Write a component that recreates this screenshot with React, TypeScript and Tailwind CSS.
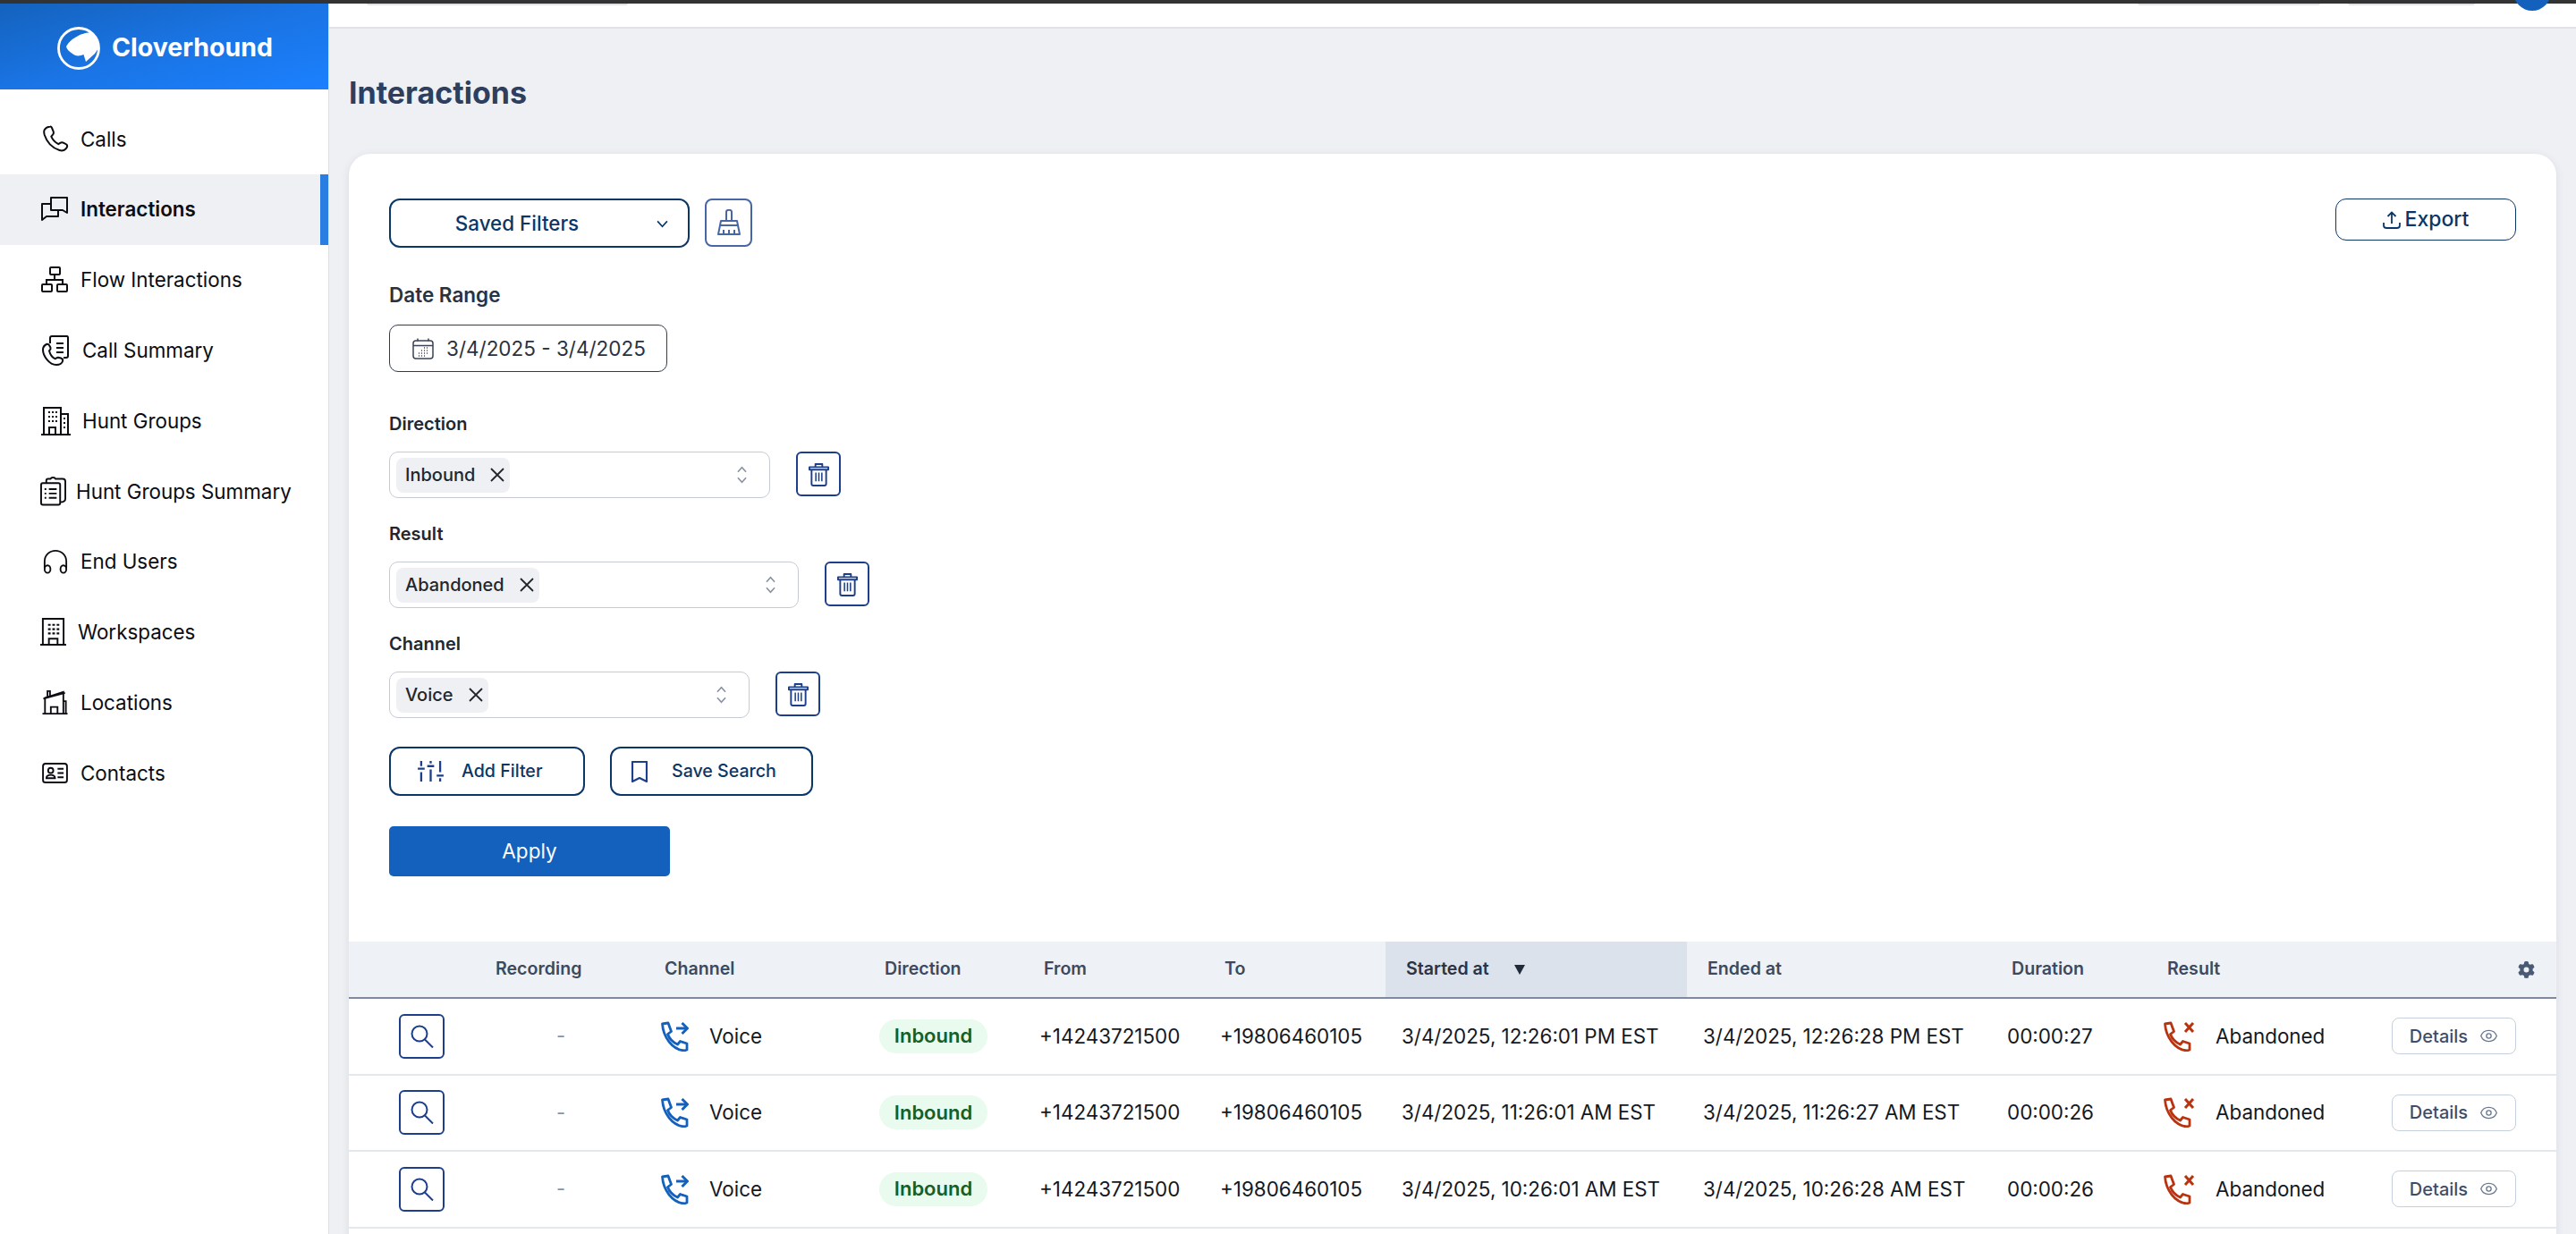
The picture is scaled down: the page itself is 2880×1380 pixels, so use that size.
import { useState } from "react";
import { Eye } from "lucide-react";

type IconProps = { className?: string };

const PHONE_PATH =
  "M2.5 3 9 2l3.500 9.500-4 3c1.800 5 5.500 9 11 11.500l3-3.500 7.500 2.500v7l-3 1C13.500 31.500 3.500 18 2.500 3Z";

function PhoneLine({ className }: IconProps) {
  return (
    <svg viewBox="0 0 30 30" fill="none" stroke="currentColor" strokeWidth="2" strokeLinejoin="round" className={className}>
      <path d="M9 1.500c-2.500.2-5 1.500-6.200 3.500-1 1.800-.6 4 0 6 2.600 8 9 14.500 16.700 17 2.500.8 5 .5 7-1.500 1.500-1.500 2-3.700.8-5l-3-1.700c-1.300-.7-2.800-.7-4 .1l-2 1.300c-3.500-1.800-6.500-5-8-8.500l1.700-2c.9-1 1.100-2.500.6-3.800L11 3c-.3-.9-1.100-1.600-2-1.500Z" />
    </svg>
  );
}

function ChatsIcon({ className }: IconProps) {
  return (
    <svg viewBox="0 0 30 28" fill="none" stroke="currentColor" strokeWidth="2" strokeLinejoin="round" className={className}>
      <path d="M11 1h18v17l-5-3H11z" />
      <path d="M10 8H1v18l5-4h13v-6" />
    </svg>
  );
}

function FlowIcon({ className }: IconProps) {
  return (
    <svg viewBox="0 0 30 30" fill="none" stroke="currentColor" strokeWidth="2" className={className}>
      <rect x="10" y="1" width="11" height="8" rx="1" />
      <rect x="1" y="20" width="11" height="8" rx="1" />
      <rect x="18" y="20" width="11" height="8" rx="1" />
      <path d="M15 9v6M6 20v-5h18v5" />
    </svg>
  );
}

function CallSummaryIcon({ className }: IconProps) {
  return (
    <svg viewBox="0 0 30 34" fill="none" stroke="currentColor" strokeWidth="2" strokeLinejoin="round" className={className}>
      <path d="M9 9V3c0-1 1-2 2-2h17c1 0 1 1 1 2v20c0 1-1 2-2 2h-3" />
      <path d="M16 9h8M16 14h8M16 19h8" />
      <path d="M5 10c-2 1-4 3-4 6 0 7 7 17 15 17 3 0 6-1 7-4 .5-1.500-.5-3-2-3.500l-3-.8c-1.200-.2-2 1-3 1.500-3-1-6-5-7-9 1-.8 2-2 1.500-3.500L8 11c-.5-1-2-1.500-3-1Z" />
    </svg>
  );
}

function HuntGroupsIcon({ className }: IconProps) {
  return (
    <svg viewBox="0 0 33 32" fill="none" stroke="currentColor" strokeWidth="2" className={className}>
      <path d="M0 31h33M3 31V1h19v30M22 8h8v23" />
      <path d="M9 31v-8h7v8" />
      <path d="M8 6h2M12 6h2M16 6h2M8 11h2M12 11h2M16 11h2M8 16h2M12 16h2M16 16h2M25 13h2M25 18h2M25 23h2" strokeWidth="2.200" />
    </svg>
  );
}

function ClipboardListIcon({ className }: IconProps) {
  return (
    <svg viewBox="0 0 30 34" fill="none" stroke="currentColor" strokeWidth="2" strokeLinejoin="round" className={className}>
      <rect x="1" y="8" width="22" height="25" rx="2" />
      <path d="M7 8V5c0-1 1-2 2-2h3c.5-2 5-2 5.500 0H26c1.500 0 3 1 3 3v20c0 2-2 4-6 4" />
      <path d="M10 15h9M10 20h9M10 25h9M5 15h2M5 20h2M5 25h2" />
    </svg>
  );
}

function HeadsetIcon({ className }: IconProps) {
  return (
    <svg viewBox="0 0 30 30" fill="none" stroke="currentColor" strokeWidth="2" className={className}>
      <path d="M2 23v-8C2 7 8 2 15 2s13 5 13 13v8" />
      <ellipse cx="5.500" cy="24" rx="3.500" ry="4.500" />
      <ellipse cx="24.500" cy="24" rx="3.500" ry="4.500" />
    </svg>
  );
}

function WorkspaceIcon({ className }: IconProps) {
  return (
    <svg viewBox="0 0 30 32" fill="none" stroke="currentColor" strokeWidth="2" className={className}>
      <path d="M0 31h30M3 31V1h24v30" />
      <path d="M10 31v-7h10v7" />
      <path d="M9 8h3M14 8h3M19 8h3M9 13h3M14 13h3M19 13h3M9 18h3M14 18h3M19 18h3" strokeWidth="2.200" />
    </svg>
  );
}

function LocationIcon({ className }: IconProps) {
  return (
    <svg viewBox="0 0 30 30" fill="none" stroke="currentColor" strokeWidth="2" className={className}>
      <path d="M0 28h30M3 28V9l22-7v26M25 13h3v15" />
      <path d="M1 10 27 3M6 8V1h3v6" />
      <path d="M10 28v-8h8v8" />
    </svg>
  );
}

function ContactIcon({ className }: IconProps) {
  return (
    <svg viewBox="0 0 30 24" fill="none" stroke="currentColor" strokeWidth="2" className={className}>
      <rect x="1" y="1" width="28" height="22" rx="3" />
      <circle cx="10" cy="9" r="3" />
      <path d="M5 18c0-5 10-5 10 0ZM18 7h7M18 12h7M18 17h7" />
    </svg>
  );
}

function BroomIcon({ className }: IconProps) {
  return (
    <svg viewBox="0 0 26 30" fill="none" stroke="currentColor" strokeWidth="2" strokeLinejoin="round" className={className}>
      <path d="M10 13V3c0-3 6-3 6 0v10" />
      <path d="M4 13h18l1 5H3z" />
      <path d="M3 18 1 28h24l-2-10M7 23v5M13 23v5M19 23v5" />
    </svg>
  );
}

function CalendarIcon({ className }: IconProps) {
  return (
    <svg viewBox="0 0 24 24" fill="none" stroke="currentColor" strokeWidth="1.500" className={className}>
      <rect x="1" y="3" width="22" height="20" rx="3" />
      <path d="M1 8.500h22M6 0.500v3M18 0.500v3" />
      <path d="M7 17h1M10 17h1M13 17h1M16 17h1M10 14h1M13 14h1M16 14h1M7 20h1M10 20h1M13 20h1M16 11h1M13 11h1" strokeWidth="1.300" />
    </svg>
  );
}

function TrashIcon({ className }: IconProps) {
  return (
    <svg viewBox="0 0 24 28" fill="none" stroke="currentColor" strokeWidth="2" strokeLinejoin="round" className={className}>
      <path d="M8 5V2h8v3" />
      <path d="M1 5.500h22v3H1z" />
      <path d="M3.500 8.500V25c0 1 1 2 2 2h13c1 0 2-1 2-2V8.500" />
      <path d="M8.500 12v10M12 12v10M15.500 12v10" strokeWidth="1.600" />
    </svg>
  );
}

function UpDownIcon({ className }: IconProps) {
  return (
    <svg viewBox="0 0 14 22" fill="none" stroke="currentColor" strokeWidth="1.800" className={className}>
      <path d="M2 7.500 7 2l5 5.500M2 14.500 7 20l5-5.500" />
    </svg>
  );
}

function SlidersIcon({ className }: IconProps) {
  return (
    <svg viewBox="0 0 30 26" fill="none" stroke="currentColor" strokeWidth="2.400" className={className}>
      <path d="M4 1v6M4 14v11M15 1v3M15 11v14M26 1v13M26 21v4" />
      <path d="M0 10h8M11 7h8M22 18h8" />
    </svg>
  );
}

function BookmarkIcon({ className }: IconProps) {
  return (
    <svg viewBox="0 0 18 24" fill="none" stroke="currentColor" strokeWidth="2.200" strokeLinejoin="round" className={className}>
      <path d="M1 1h16v22l-8-4-8 4z" />
    </svg>
  );
}

function ExportIcon({ className }: IconProps) {
  return (
    <svg viewBox="0 0 20 20" fill="none" stroke="currentColor" strokeWidth="1.800" className={className}>
      <path d="M10 14V1.500M5.500 6 10 1.500 14.500 6" />
      <path d="M1 13v3c0 2 1 3 3 3h12c2 0 3-1 3-3v-3" />
    </svg>
  );
}

function SearchIcon({ className }: IconProps) {
  return (
    <svg viewBox="0 0 26 26" fill="none" stroke="currentColor" strokeWidth="2" className={className}>
      <circle cx="10" cy="10" r="8.500" />
      <path d="m16 16.500 9 9" />
    </svg>
  );
}

function GearIcon({ className }: IconProps) {
  return (
    <svg viewBox="0 0 512 512" fill="currentColor" className={className}>
      <path d="M495.900 166.600c3.200 8.700.5 18.400-6.400 24.600l-43.300 39.400c1.100 8.300 1.700 16.800 1.700 25.400s-.6 17.100-1.700 25.400l43.300 39.400c6.900 6.200 9.600 15.900 6.400 24.600-4.400 11.900-9.700 23.300-15.800 34.300l-4.700 8.100c-6.600 11-14 21.400-22.100 31.200-5.900 7.200-15.700 9.600-24.500 6.800l-55.700-17.700c-13.400 10.300-28.200 18.900-44 25.400l-12.500 57.100c-2 9.100-9 16.300-18.200 17.800-13.800 2.300-28 3.500-42.500 3.500s-28.700-1.200-42.500-3.500c-9.200-1.500-16.200-8.700-18.200-17.800l-12.500-57.100c-15.800-6.500-30.600-15.100-44-25.400l-55.600 17.800c-8.800 2.800-18.600.3-24.500-6.800-8.100-9.800-15.500-20.200-22.100-31.200l-4.700-8.100c-6.100-11-11.400-22.400-15.800-34.300-3.200-8.700-.5-18.400 6.400-24.600l43.300-39.400c-1.100-8.400-1.700-16.900-1.700-25.500s.6-17.100 1.700-25.400l-43.300-39.400c-6.900-6.200-9.600-15.900-6.400-24.600 4.400-11.900 9.700-23.300 15.800-34.300l4.700-8.100c6.600-11 14-21.400 22.100-31.200 5.900-7.200 15.700-9.600 24.500-6.800l55.700 17.700c13.400-10.300 28.200-18.900 44-25.400l12.500-57.100c2-9.100 9-16.300 18.200-17.800C227.300 1.200 241.500 0 256 0s28.700 1.200 42.500 3.500c9.200 1.500 16.200 8.700 18.200 17.800l12.500 57.100c15.800 6.500 30.600 15.100 44 25.400l55.700-17.700c8.800-2.800 18.600-.3 24.500 6.800 8.100 9.800 15.500 20.200 22.100 31.200l4.700 8.100c6.100 11 11.400 22.400 15.800 34.300zM256 336a80 80 0 1 0 0-160 80 80 0 1 0 0 160z" />
    </svg>
  );
}

function LogoMark({ className }: IconProps) {
  return (
    <svg viewBox="0 0 48 48" className={className}>
      <path
        d="M10 22C13 17 16 14 20 12 26 8 31 7 37 6L44 12 46 24 42 30 32 39 29.500 31C25 33 20 33 17 30 14 28 11 26 10 22Z"
        fill="white"
      />
      <circle cx="24" cy="24" r="22.500" fill="none" stroke="white" strokeWidth="2.800" />
    </svg>
  );
}

function InboundCallIcon({ className }: IconProps) {
  return (
    <svg viewBox="0 0 32 34" fill="none" stroke="currentColor" className={className}>
      <path d={PHONE_PATH} strokeWidth="2.800" strokeLinejoin="round" />
      <path d="M18 8h11" strokeWidth="3" />
      <path d="m24.500 2 6 6-6 6" strokeWidth="3" />
    </svg>
  );
}

function AbandonedCallIcon({ className }: IconProps) {
  return (
    <svg viewBox="0 0 36 34" fill="none" stroke="currentColor" className={className}>
      <path d={PHONE_PATH} strokeWidth="2.800" strokeLinejoin="round" />
      <path d="m25 2 9 10M34 2l-9 10" strokeWidth="3" />
    </svg>
  );
}

const NAV_ITEMS = [
  { label: "Calls", icon: <PhoneLine className="w-[30px] h-[30px] ml-[47px] mr-[13px]" /> },
  { label: "Interactions", icon: <ChatsIcon className="w-[30px] h-[28px] ml-[46px] mr-[14px]" /> },
  { label: "Flow Interactions", icon: <FlowIcon className="w-[30px] h-[30px] ml-[46px] mr-[14px]" /> },
  { label: "Call Summary", icon: <CallSummaryIcon className="w-[30px] h-[34px] ml-[47px] mr-[15px]" /> },
  { label: "Hunt Groups", icon: <HuntGroupsIcon className="w-[33px] h-[32px] ml-[46px] mr-[13px]" /> },
  { label: "Hunt Groups Summary", icon: <ClipboardListIcon className="w-[29px] h-[34px] ml-[45px] mr-[11px]" /> },
  { label: "End Users", icon: <HeadsetIcon className="w-[28px] h-[28px] ml-[48px] mr-[14px]" /> },
  { label: "Workspaces", icon: <WorkspaceIcon className="w-[29px] h-[31px] ml-[45px] mr-[13px]" /> },
  { label: "Locations", icon: <LocationIcon className="w-[29px] h-[28px] ml-[47px] mr-[14px]" /> },
  { label: "Contacts", icon: <ContactIcon className="w-[29px] h-[23px] ml-[47px] mr-[14px]" /> },
];

const ROWS = [
  { started: "3/4/2025, 12:26:01 PM EST", ended: "3/4/2025, 12:26:28 PM EST", duration: "00:00:27" },
  { started: "3/4/2025, 11:26:01 AM EST", ended: "3/4/2025, 11:26:27 AM EST", duration: "00:00:26" },
  { started: "3/4/2025, 10:26:01 AM EST", ended: "3/4/2025, 10:26:28 AM EST", duration: "00:00:26" },
];

const TABLE_COLS =
  "grid grid-cols-[141px_189px_246px_178px_202px_203px_337px_340px_174px_200px_1fr]";

function Sidebar() {
  const [active] = useState("Interactions");
  return (
    <aside className="w-[368px] shrink-0 bg-white border-r-[1px] border-[#dcdfe6]">
      <div className="h-[96px] flex items-center pl-[64px] pt-[3px] bg-gradient-to-br from-[#1462bd] via-[#1a74e4] to-[#1b80ff]">
        <LogoMark className="w-[48px] h-[48px]" />
        <span className="ml-[13px] text-[28.500px] font-bold text-white">Cloverhound</span>
      </div>
      <nav className="pt-[16px]">
        {NAV_ITEMS.map((item) => (
          <div
            key={item.label}
            className={
              item.label === active
                ? "h-[78.800px] flex items-center text-[22.400px] font-semibold text-[#0b0d12] bg-[#eff0f4] border-r-[9px] border-[#2a7de1]"
                : "h-[78.800px] flex items-center text-[22.400px] text-[#0b0d12]"
            }
          >
            {item.icon}
            <span>{item.label}</span>
          </div>
        ))}
      </nav>
    </aside>
  );
}

function FilterRow({ label, chip, selectWidth }: { label: string; chip: string; selectWidth: string }) {
  return (
    <div className="mt-[28px] first:mt-[46px]">
      <div className="text-[20px] leading-[24px] font-semibold text-[#23262d]">{label}</div>
      <div className="mt-[19px] flex items-start">
        <div className={`${selectWidth} h-[52px] flex items-center pl-[7px] pr-[24px] rounded-[10px] border-[1.500px] border-[#c5cad4]`}>
          <div className="h-[39px] flex items-center pl-[10px] pr-[6px] rounded-[8px] bg-[#eff0f4] text-[20px] font-medium text-[#23262d]">
            {chip}
            <svg viewBox="0 0 16 16" fill="none" stroke="currentColor" strokeWidth="1.800" className="ml-[17px] w-[16px] h-[16px]">
              <path d="m1 1 14 14M15 1 1 15" />
            </svg>
          </div>
          <UpDownIcon className="ml-auto w-[13px] h-[20px] text-[#8a92a3]" />
        </div>
        <button className="ml-[29px] w-[50px] h-[50px] flex items-center justify-center rounded-[6px] border-2 border-[#1c3f8b] text-[#1c3f8b]">
          <TrashIcon className="w-[23px] h-[27px]" />
        </button>
      </div>
    </div>
  );
}

function TableHeader() {
  const cell = "flex items-center pl-[23px] text-[19.600px] font-semibold text-[#3c4a61]";
  return (
    <div className={`${TABLE_COLS} h-[64px] bg-[#eef2f6] border-b-2 border-[#7d8aa3]`}>
      <div />
      <div className={cell}>Recording</div>
      <div className={cell}>Channel</div>
      <div className={cell}>Direction</div>
      <div className={cell}>From</div>
      <div className={cell}>To</div>
      <div className="flex items-center pl-[23px] text-[19.600px] font-semibold text-[#2a3445] bg-[#dce2ec]">
        Started at
        <span className="ml-[28px] w-0 h-0 border-x-[6px] border-x-transparent border-t-[11px] border-t-[#1f2a3b]" />
      </div>
      <div className={cell}>Ended at</div>
      <div className={cell}>Duration</div>
      <div className={cell}>Result</div>
      <div className="flex items-center justify-end pr-[24px]">
        <GearIcon className="w-[19px] h-[19px] text-[#4a5a74]" />
      </div>
    </div>
  );
}

function TableRow({ started, ended, duration }: { started: string; ended: string; duration: string }) {
  const cell = "flex items-center pl-[18px] text-[22.400px] text-[#14181f]";
  return (
    <div className={`${TABLE_COLS} h-[85.500px] border-b-2 border-[#e3e7ee]`}>
      <div className="flex items-center pl-[56px]">
        <button className="w-[51px] h-[50px] flex items-center justify-center rounded-[6px] border-2 border-[#1c3f8b] text-[#1c3f8b]">
          <SearchIcon className="w-[26px] h-[26px]" />
        </button>
      </div>
      <div className="flex items-center pl-[91px] text-[22px] text-[#8792a5]">-</div>
      <div className={cell}>
        <InboundCallIcon className="w-[32px] h-[34px] text-[#1460bd]" />
        <span className="ml-[23px]">Voice</span>
      </div>
      <div className="flex items-center pl-[17px]">
        <span className="h-[38px] w-[121px] flex items-center justify-center rounded-full bg-[#e9faee] text-[22px] font-semibold text-[#146026]">
          Inbound
        </span>
      </div>
      <div className={cell}>+14243721500</div>
      <div className={cell}>+19806460105</div>
      <div className={cell}>{started}</div>
      <div className={cell}>{ended}</div>
      <div className={cell}>{duration}</div>
      <div className={cell}>
        <AbandonedCallIcon className="w-[36px] h-[34px] text-[#b8330f]" />
        <span className="ml-[23px]">Abandoned</span>
      </div>
      <div className="flex items-center justify-end pr-[45px]">
        <button className="w-[139px] h-[41px] flex items-center justify-center rounded-[8px] border-[1.500px] border-[#c5d0de] text-[20px] font-medium text-[#3f4e68]">
          Details
          <Eye className="ml-[13px] w-[21px] h-[21px] text-[#6b7890]" strokeWidth={1.5} />
        </button>
      </div>
    </div>
  );
}

function App() {
  return (
    <div className="h-[1380px] w-[2880px] overflow-hidden flex flex-col bg-[#eff0f4] [font-family:Inter,'Liberation_Sans',sans-serif]">
      <div className="h-[4px] shrink-0 bg-[#333333]" />
      <div className="flex flex-1 min-h-0">
        <Sidebar />
        <main className="flex-1 min-w-0">
          <header className="h-[28px] flex items-start bg-white border-b-[2px] border-[#e0e2e6] pl-[42px]">
            <div className="w-[292px] h-[2px] rounded-b-[2px] bg-[#dfe3e6]" />
            <div className="ml-[1688px] w-[204px] h-[2px] rounded-b-[2px] bg-[#dfe3e6]" />
            <div className="ml-[31px] w-[142px] h-[2px] rounded-b-[2px] bg-[#dfe3e6]" />
            <div className="ml-[43px] w-[42px] h-[42px] -mt-[34px] rounded-full bg-[#1460bd]" />
          </header>
          <div className="px-[22px]">
            <h1 className="mt-[50px] h-[44px] text-[34px] leading-[44px] font-bold text-[#2d3e5f]">Interactions</h1>
            <section className="mt-[46px] bg-white rounded-[24px] shadow-[0_2px_10px_rgba(60,70,100,0.12)]">
              <div className="px-[45px] pt-[50px]">
                <div className="flex items-start justify-between">
                  <div className="flex items-start">
                    <button className="w-[336px] h-[55px] relative flex items-center justify-center pr-[50px] rounded-[12px] border-[2.500px] border-[#0b3768] text-[22.400px] font-medium text-[#0b3768]">
                      Saved Filters
                      <svg viewBox="0 0 14 10" fill="none" stroke="currentColor" strokeWidth="1.800" className="absolute right-[22px] top-[22px] w-[13px] h-[9px]">
                        <path d="m1 1.500 6 6.500 6-6.500" />
                      </svg>
                    </button>
                    <button className="ml-[17px] w-[53px] h-[54px] flex items-center justify-center rounded-[8px] border-[2.500px] border-[#4666a6] text-[#4666a6]">
                      <BroomIcon className="w-[26px] h-[30px]" />
                    </button>
                  </div>
                  <button className="w-[202px] h-[47px] flex items-center justify-center rounded-[12px] border-[1px] border-[#0b3768] text-[23px] font-medium text-[#0b3768]">
                    <ExportIcon className="w-[20px] h-[20px] mr-[5px]" />
                    Export
                  </button>
                </div>
                <div className="mt-[38px] text-[22.500px] leading-[30px] font-semibold text-[#2a3240]">Date Range</div>
                <div className="mt-[18px] w-[311px] h-[53px] flex items-center pl-[25px] rounded-[10px] border-[1px] border-[#333c4d] text-[22.500px] text-[#2a3240]">
                  <CalendarIcon className="w-[24px] h-[24px] text-[#3a4356]" />
                  <span className="ml-[14px] whitespace-nowrap">3/4/2025 - 3/4/2025</span>
                </div>
                <div>
                  <FilterRow label="Direction" chip="Inbound" selectWidth="w-[426px]" />
                  <FilterRow label="Result" chip="Abandoned" selectWidth="w-[458px]" />
                  <FilterRow label="Channel" chip="Voice" selectWidth="w-[403px]" />
                </div>
                <div className="mt-[32px] flex items-start">
                  <button className="w-[219px] h-[55px] flex items-center pl-[30px] rounded-[12px] border-[2.500px] border-[#0b3768] text-[19.600px] font-medium text-[#0b3768]">
                    <SlidersIcon className="w-[29px] h-[25px] text-[#1c3f8b]" />
                    <span className="ml-[20px]">Add Filter</span>
                  </button>
                  <button className="ml-[28px] w-[227px] h-[55px] flex items-center pl-[22px] rounded-[12px] border-[2.500px] border-[#0b3768] text-[19.600px] font-medium text-[#0b3768]">
                    <BookmarkIcon className="w-[18px] h-[24px] text-[#1c3f8b]" />
                    <span className="ml-[27px]">Save Search</span>
                  </button>
                </div>
                <button className="mt-[34px] w-[314px] h-[56px] rounded-[5px] bg-[#1460bd] text-[22.500px] text-white">Apply</button>
              </div>
              <div className="mt-[73px]">
                <TableHeader />
                {ROWS.map((row) => (
                  <TableRow key={row.started} {...row} />
                ))}
                {/* next row starts under the fold, only the card keeps going */}
                <div className="h-[86px]" />
              </div>
            </section>
          </div>
        </main>
      </div>
    </div>
  );
}

export default App;
